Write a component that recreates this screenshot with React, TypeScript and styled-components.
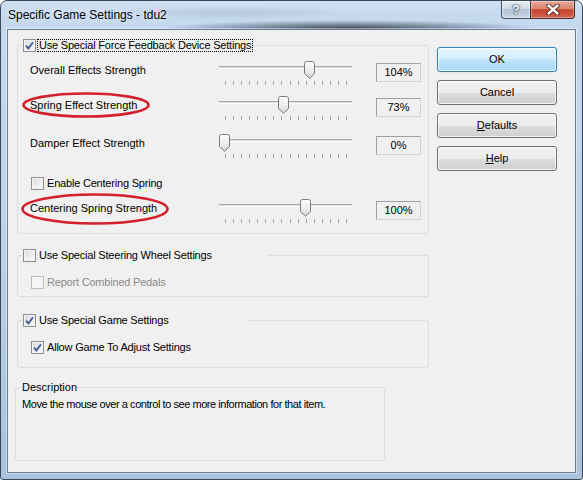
import React from "react";
import styled, { createGlobalStyle } from "styled-components";

const GlobalStyle = createGlobalStyle`
  html, body {
    margin: 0;
    padding: 0;
  }
  body {
    background: #ffffff;
    font-family: "Liberation Sans", Arial, sans-serif;
    font-size: 11px;
    color: #000000;
  }
`;

const Window = styled.div`
  box-sizing: border-box;
  width: 583px;
  height: 480px;
  display: flex;
  flex-direction: column;
  border: 1px solid #3a4858;
  border-radius: 7px 7px 3px 3px;
  background: linear-gradient(180deg, #c5d9ef 0%, #bdd3ea 45%, #a9c1db 100%);
  overflow: hidden;
`;

const TitleBar = styled.div`
  flex: none;
  height: 28px;
  display: flex;
  align-items: flex-start;
  padding-left: 7px;
  background:
    radial-gradient(ellipse 190px 9px at 60% 100%, rgba(28, 38, 56, 0.85), rgba(28, 38, 56, 0)),
    radial-gradient(ellipse 120px 7px at 40% 40%, rgba(90, 110, 140, 0.18), rgba(90, 110, 140, 0)),
    linear-gradient(180deg, rgba(255, 255, 255, 0.2), rgba(255, 255, 255, 0) 60%);
`;

const Title = styled.div`
  flex: 1;
  padding-top: 7px;
  font-size: 12px;
  line-height: 14px;
  color: #000000;
  text-shadow: 0 0 6px rgba(255, 255, 255, 0.9);
`;

const CaptionButtons = styled.div`
  display: flex;
  margin-right: 7px;
`;

const HelpButton = styled.div`
  box-sizing: border-box;
  width: 29px;
  height: 18px;
  border: 1px solid rgba(45, 58, 76, 0.85);
  border-top: none;
  border-right: none;
  border-radius: 0 0 0 4px;
  background: linear-gradient(180deg, #e6edf4 0%, #cfdbe7 45%, #b3c4d6 50%, #c8d6e4 100%);
  box-shadow: inset 0 0 0 1px rgba(255, 255, 255, 0.45);
  display: flex;
  align-items: center;
  justify-content: center;
  font-weight: bold;
  font-size: 13px;
  color: #ffffff;
  text-shadow: 0 0 1px #2d3a4c, 0 0 1px #2d3a4c, 0 0 2px #2d3a4c;
`;

const CloseButton = styled.div`
  box-sizing: border-box;
  width: 45px;
  height: 18px;
  border: 1px solid rgba(60, 30, 28, 0.9);
  border-top: none;
  border-radius: 0 0 4px 0;
  background: linear-gradient(180deg, #e8ab9c 0%, #d9826f 45%, #c4432c 52%, #d3664f 100%);
  box-shadow: inset 0 0 0 1px rgba(255, 255, 255, 0.35);
  display: flex;
  align-items: center;
  justify-content: center;
`;

const Client = styled.div`
  flex: 1;
  margin: 0 6px 6px;
  border: 1px solid #6a7d93;
  background: #f0f0f0;
  display: flex;
  flex-direction: column;
  padding-top: 9px;
  box-shadow: 0 0 0 1px rgba(255, 255, 255, 0.45);
`;

const TopArea = styled.div`
  display: flex;
  align-items: flex-start;
  gap: 8px;
  margin-left: 9px;
`;

const Groups = styled.div`
  width: 412px;
  display: flex;
  flex-direction: column;
`;

const GroupBox = styled.fieldset<{ $mt: number; $pb: number; $width?: number; $ml?: number }>`
  box-sizing: border-box;
  width: ${(p) => (p.$width ? `${p.$width}px` : "auto")};
  min-width: 0;
  margin: ${(p) => p.$mt}px 0 0 ${(p) => p.$ml ?? 0}px;
  padding: 0 0 ${(p) => p.$pb}px;
  border: 1px solid #d5dfe5;
  border-radius: 3px;
`;

const Legend = styled.legend<{ $width?: number; $pl: number }>`
  box-sizing: border-box;
  display: flex;
  align-items: center;
  height: 13px;
  width: ${(p) => (p.$width ? `${p.$width}px` : "auto")};
  margin-left: 4px;
  padding: 0 0 0 ${(p) => p.$pl}px;
  line-height: 13px;
`;

const GroupBody = styled.div<{ $pl: number }>`
  display: flex;
  flex-direction: column;
  padding-left: ${(p) => p.$pl}px;
`;

const Box = styled.span<{ $disabled?: boolean }>`
  box-sizing: border-box;
  flex: none;
  width: 13px;
  height: 13px;
  border: 1px solid ${(p) => (p.$disabled ? "#bcbcbc" : "#8e8f8f")};
  background: ${(p) =>
    p.$disabled ? "#f4f4f4" : "linear-gradient(135deg, #d2d4d6 0%, #eeeeee 55%, #fbfbfb 100%)"};
  box-shadow: inset 0 0 0 1px ${(p) => (p.$disabled ? "#f7f7f7" : "#f4f4f4")};
  display: flex;
  align-items: center;
  justify-content: center;
`;

const Caption = styled.span<{ $focus?: boolean; $disabled?: boolean }>`
  margin-left: 1px;
  padding: 0 1px;
  line-height: 11px;
  letter-spacing: -0.2px;
  white-space: nowrap;
  border: 1px dotted ${(p) => (p.$focus ? "#000000" : "transparent")};
  color: ${(p) => (p.$disabled ? "#8a8a8a" : "#000000")};
`;

const CheckRow = styled.div<{ $mt: number }>`
  display: flex;
  align-items: center;
  height: 13px;
  margin: ${(p) => p.$mt}px 0 0 1px;
`;

const Row = styled.div<{ $mt: number }>`
  display: flex;
  align-items: center;
  height: 24px;
  margin-top: ${(p) => p.$mt}px;
`;

const RowLabel = styled.span`
  position: relative;
  flex: none;
  width: 189px;
  line-height: 13px;
  white-space: nowrap;
`;

const Ellipse = styled.svg`
  position: absolute;
  top: 50%;
  overflow: visible;
  pointer-events: none;
`;

const SliderBox = styled.div`
  position: relative;
  flex: none;
  align-self: flex-start;
  width: 133px;
  height: 24px;
  margin-top: 3px;
`;

const Track = styled.div`
  box-sizing: border-box;
  height: 3px;
  margin-top: 5px;
  border-top: 1px solid #a9a9a9;
  border-bottom: 1px solid #ffffff;
  background: #dcdcdc;
`;

const Ticks = styled.div`
  display: flex;
  justify-content: space-between;
  padding: 0 5px 0 6px;
  margin-top: 12px;
`;

const Tick = styled.span`
  width: 1px;
  height: 4px;
  background: #a4a4a4;
`;

const Thumb = styled.svg`
  position: absolute;
  top: 0;
  width: 11px;
  height: 18px;
`;

const ValueBox = styled.div`
  box-sizing: border-box;
  flex: none;
  align-self: flex-start;
  width: 45px;
  height: 19px;
  margin: 5px 0 0 24px;
  border: 1px solid;
  border-color: #a0a0a0 #d4d4d4 #d4d4d4 #a0a0a0;
  text-align: center;
  line-height: 17px;
`;

const Buttons = styled.div`
  display: flex;
  flex-direction: column;
  gap: 8px;
  margin-top: 8px;
`;

const Button = styled.button<{ $primary?: boolean }>`
  box-sizing: border-box;
  width: 120px;
  height: 25px;
  padding: 0;
  border: 1px solid ${(p) => (p.$primary ? "#3c7fb1" : "#707070")};
  border-radius: 3px;
  background: ${(p) =>
    p.$primary
      ? "linear-gradient(180deg, #e5f5fd 0%, #d4eefc 50%, #bde5fb 50%, #a9daf6 100%)"
      : "linear-gradient(180deg, #f2f2f2 0%, #ebebeb 50%, #dddddd 50%, #cfcfcf 100%)"};
  box-shadow: ${(p) =>
    p.$primary
      ? "inset 0 0 0 1px rgba(255,255,255,0.75), 0 0 1px 0 #6ac7ef"
      : "inset 0 0 0 1px rgba(255,255,255,0.75)"};
  font-family: inherit;
  font-size: 11px;
  font-weight: normal;
  color: #000000;
  line-height: 13px;
`;

const Key = styled.span`
  text-decoration: underline;
`;

const DescriptionText = styled.div`
  padding: 4px 0 0 6px;
  line-height: 13px;
  letter-spacing: -0.45px;
`;

const Tick2 = ({ checked }: { checked: boolean }) =>
  checked ? (
    <svg width="9" height="9" viewBox="0 0 9 9">
      <path d="M1 4.6 L3.4 7.4 L8 1.2" fill="none" stroke="#47609a" strokeWidth="1.9" />
    </svg>
  ) : null;

const CheckBox = ({ checked = false, disabled = false }: { checked?: boolean; disabled?: boolean }) => (
  <Box $disabled={disabled}>
    <Tick2 checked={checked} />
  </Box>
);

type Ring = { left: number; width: number; height: number; dy: number };

const RedRing = ({ left, width, height, dy }: Ring) => (
  <Ellipse
    width={width}
    height={height}
    style={{ left, marginTop: -height / 2 + dy }}
    viewBox={`0 0 ${width} ${height}`}
  >
    <ellipse
      cx={width / 2}
      cy={height / 2}
      rx={width / 2 - 1.5}
      ry={height / 2 - 1.5}
      fill="none"
      stroke="#d41f2c"
      strokeWidth="2.6"
    />
  </Ellipse>
);

const Slider = ({ value, max }: { value: number; max: number }) => {
  const left = Math.round((value / max) * 122);
  return (
    <SliderBox>
      <Track />
      <Ticks>
        {Array.from({ length: 16 }).map((_, i) => (
          <Tick key={i} />
        ))}
      </Ticks>
      <Thumb style={{ left }} viewBox="0 0 11 18">
        <defs>
          <linearGradient id="thumbFill" x1="0" y1="0" x2="0" y2="1">
            <stop offset="0" stopColor="#fdfdfd" />
            <stop offset="0.5" stopColor="#eeeeee" />
            <stop offset="1" stopColor="#d4d4d4" />
          </linearGradient>
        </defs>
        <path
          d="M0.5 2.5 Q0.5 0.5 2.5 0.5 H8.5 Q10.5 0.5 10.5 2.5 V12.5 L5.5 17.3 L0.5 12.5 Z"
          fill="url(#thumbFill)"
          stroke="#7b7b7b"
        />
      </Thumb>
    </SliderBox>
  );
};

type RowProps = { mt: number; label: string; value: number; ring?: Ring };

const SliderRow = ({ mt, label, value, ring }: RowProps) => (
  <Row $mt={mt}>
    <RowLabel>
      {label}
      {ring && <RedRing {...ring} />}
    </RowLabel>
    <Slider value={value} max={150} />
    <ValueBox>{value}%</ValueBox>
  </Row>
);

export default function App() {
  return (
    <>
      <GlobalStyle />
      <Window>
        <TitleBar>
          <Title>Specific Game Settings - tdu2</Title>
          <CaptionButtons>
            <HelpButton>?</HelpButton>
            <CloseButton>
              <svg width="14" height="11" viewBox="0 0 14 11">
                <path d="M2.5 1.5 L11.5 9.5 M11.5 1.5 L2.5 9.5" stroke="#3d1f1a" strokeWidth="4.2" strokeLinecap="round" />
                <path d="M2.5 1.5 L11.5 9.5 M11.5 1.5 L2.5 9.5" stroke="#ffffff" strokeWidth="2.4" strokeLinecap="round" />
              </svg>
            </CloseButton>
          </CaptionButtons>
        </TitleBar>
        <Client>
          <TopArea>
            <Groups>
              <GroupBox $mt={0} $pb={13}>
                <Legend $pl={1}>
                  <CheckBox checked />
                  <Caption $focus>Use Special Force Feedback Device Settings</Caption>
                </Legend>
                <GroupBody $pl={12}>
                  <SliderRow mt={6} label="Overall Effects Strength" value={104} />
                  <SliderRow
                    mt={11}
                    label="Spring Effect Strength"
                    value={73}
                    ring={{ left: -8, width: 128, height: 26, dy: 0 }}
                  />
                  <SliderRow mt={14} label="Damper Effect Strength" value={0} />
                  <CheckRow $mt={22}>
                    <CheckBox />
                    <Caption>Enable Centering Spring</Caption>
                  </CheckRow>
                  <SliderRow
                    mt={6}
                    label="Centering Spring Strength"
                    value={100}
                    ring={{ left: -9, width: 148, height: 32, dy: 0.5 }}
                  />
                </GroupBody>
              </GroupBox>
              <GroupBox $mt={15} $pb={7}>
                <Legend $pl={1} $width={246}>
                  <CheckBox />
                  <Caption>Use Special Steering Wheel Settings</Caption>
                </Legend>
                <GroupBody $pl={12}>
                  <CheckRow $mt={14}>
                    <CheckBox disabled />
                    <Caption $disabled>Report Combined Pedals</Caption>
                  </CheckRow>
                </GroupBody>
              </GroupBox>
              <GroupBox $mt={17} $pb={13}>
                <Legend $pl={1} $width={225}>
                  <CheckBox checked />
                  <Caption>Use Special Game Settings</Caption>
                </Legend>
                <GroupBody $pl={12}>
                  <CheckRow $mt={14}>
                    <CheckBox checked />
                    <Caption>Allow Game To Adjust Settings</Caption>
                  </CheckRow>
                </GroupBody>
              </GroupBox>
            </Groups>
            <Buttons>
              <Button $primary>OK</Button>
              <Button>Cancel</Button>
              <Button>
                <Key>D</Key>efaults
              </Button>
              <Button>
                <Key>H</Key>elp
              </Button>
            </Buttons>
          </TopArea>
          <GroupBox $mt={13} $pb={49} $width={370} $ml={7}>
            <Legend $pl={2}>Description</Legend>
            <DescriptionText>Move the mouse over a control to see more information for that item.</DescriptionText>
          </GroupBox>
        </Client>
      </Window>
    </>
  );
}
